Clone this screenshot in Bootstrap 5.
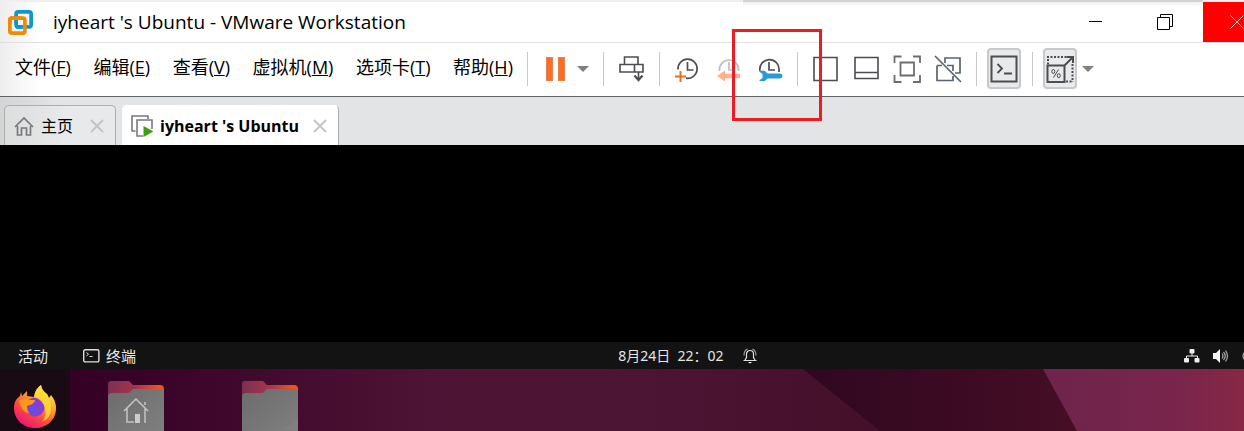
<!DOCTYPE html>
<html lang="zh-CN">
<head>
<meta charset="utf-8">
<meta name="viewport" content="width=device-width, initial-scale=1">
<title>iyheart 's Ubuntu - VMware Workstation</title>
<link href="https://cdn.jsdelivr.net/npm/bootstrap@5.3.0/dist/css/bootstrap.min.css" rel="stylesheet">
<style>
  body { font-family: "Open Sans", "Noto Sans CJK SC", sans-serif; background: #000; color: #000; overflow-x: hidden; }
  button { border: 0; background: none; padding: 0; color: inherit; }
  svg { display: block; flex: none; }

  .title-bar { height: 43px; padding-left: 8px; border-top: 2px solid #efefef; border-bottom: 1px solid #e0e0e0;
    background: linear-gradient(90deg, #ededed, #fff 40px); }
  .title-text { font-size: 19px; line-height: 24px; margin-left: 20px; font-weight: 400; }
  .top-shade { top: -2px; right: 41px; width: 37%; height: 7px; background: linear-gradient(#d2d2d2 2px, #f0f0f0 2px, #fff); }
  .caption-btns { padding-right: 3px; }
  .caption-btn { height: 40px; width: 70px; }
  .close-btn { height: 40px; background: #f00; width: 41px; padding-left: 27px; overflow: hidden; }

  .tool-bar { height: 54px; padding: 0 0 2px 15px; border-bottom: 1px solid #606366;
    background: linear-gradient(90deg, #ededed, #fff 40px); }
  .menu-list { width: 498px; font-size: 18px; line-height: 24px; padding-bottom: 4px; }
  .menu-list button { white-space: nowrap; }
  .tool-rule { width: 1px; height: 34px; margin: 0 13px 0 14px; background: #c8c8c8; flex: none; }
  .tool-group { gap: 13px; }
  .tool-toggle { width: 34px; height: 41px; margin: 0 -3px; border: 2px solid #c8c9ca; border-radius: 4px; background: #e9eaeb; }
  .caret-gap { margin-left: 8px; }

  .tab-strip { height: 48px; padding-left: 4px; gap: 6px;
    background: linear-gradient(90deg, #d3d4d5, #e3e4e6 60px); }
  .vm-tab { height: 40px; width: 112px; border: 1px solid #acadaf; border-bottom: 0; border-radius: 5px 5px 0 0;
    padding: 0 11px 0 9px; gap: 7px; font-size: 16px; background: linear-gradient(90deg, #dcdddd, #e8e9ea 60px); }
  .vm-tab.current { width: 217px; padding-left: 8px; background: #fff; border-left-color: #fff; border-top-color: #fff; font-weight: 700; }

  .vm-console { height: 197px; background: #000; }
  .guest-bar { height: 27px; background: #131313; color: #e6e6e6; font-size: 15px; line-height: 20px;
    font-family: "Noto Sans", "Noto Sans CJK SC", sans-serif; }
  .guest-left { flex: 0 0 49.7%; padding-left: 18px; gap: 35px; }
  .guest-app { gap: 6px; }
  .guest-clock { gap: 19px; white-space: pre; font-size: 14px; padding-top: 1px; }
  .guest-status { gap: 13px; overflow: hidden; }
  .guest-status .power { width: 2px; overflow: hidden; }
  .guest-desk { height: 62px; overflow: hidden; }
  .dock { width: 70px; height: 62px; background: #190b14; padding: 15px 0 0 14px; }
  .desk-icons { gap: 78px; padding: 11px 0 0 38px; }

  .callout-box { left: -23px; top: -26px; width: 90px; height: 92px; border: 3px solid #ed1c24; z-index: 5; pointer-events: none; }
</style>
</head>
<body>
<header class="title-bar d-flex align-items-center position-relative">
  <div class="top-shade position-absolute"></div>
  <svg width="25" height="25" viewBox="0 0 24 24" fill="none" stroke-width="3.6">
    <rect x="7.8" y="1.8" width="14.4" height="14.4" rx="2" stroke="#0f95d0"/>
    <rect x="1.8" y="7.8" width="14.4" height="14.4" rx="2" stroke="#f08a00"/>
    <path d="M7.8 13V7M7.8 16.2H13" stroke="#0f95d0"/>
    <path d="M6 7.8h7M1.8 14v-4q0-2.2 2.2-2.2h5" stroke="#f08a00"/>
  </svg>
  <h1 class="title-text mb-0">iyheart 's Ubuntu - VMware Workstation</h1>
  <div class="caption-btns d-flex ms-auto">
    <button class="caption-btn d-flex align-items-center justify-content-center" aria-label="最小化">
      <svg width="16" height="16"><path d="M2 7.5h13" stroke="#000"/></svg>
    </button>
    <button class="caption-btn d-flex align-items-center justify-content-center" aria-label="还原">
      <svg width="16" height="18" fill="none" stroke="#000"><path d="M.5 4.5h12v12h-12zM3.500 4.500v-3h12v12h-3"/></svg>
    </button>
  </div>
  <button class="close-btn d-flex align-items-center" aria-label="关闭">
    <svg width="14" height="14"><path d="M.5 .5l13 13M13.500 .5l-13 13" stroke="#fff" stroke-width=".8"/></svg>
  </button>
</header>

<nav class="tool-bar d-flex align-items-center">
  <div class="menu-list d-flex justify-content-between flex-shrink-0">
    <button>文件(<u>F</u>)</button>
    <button>编辑(<u>E</u>)</button>
    <button>查看(<u>V</u>)</button>
    <button>虚拟机(<u>M</u>)</button>
    <button>选项卡(<u>T</u>)</button>
    <button>帮助(<u>H</u>)</button>
  </div>
  <span class="tool-rule"></span>
  <button aria-label="挂起"><svg width="28" height="28"><path d="M5 2h7v24H5zM17 2h7v24h-7z" fill="#ff6d24"/><path d="M5.500 2.500h6v23h-6zM17.500 2.500h6v23h-6z" fill="none" stroke="#d98a5e" stroke-opacity=".7"/></svg></button>
  <button class="caret-gap" aria-label="电源选项"><svg width="12" height="28"><path d="M0 11h12l-6 6z" fill="#808080"/></svg></button>
  <span class="tool-rule"></span>
  <button aria-label="发送 Ctrl+Alt+Del"><svg width="28" height="28" fill="none" stroke="#4b4d50" stroke-width="1.600"><path d="M7.500 2h13.500v7.500H7.500zM3 9.500h23v7.500H3zM17.500 9.500V17M21.500 17v8"/><path d="M17.500 20.500l4 4.500 4-4.500" stroke-width="2.200"/></svg></button>
  <span class="tool-rule"></span>
  <div class="tool-group d-flex">
    <button aria-label="拍摄快照"><svg width="28" height="28" fill="none" stroke="#4b4d50" stroke-width="1.700"><path d="M5 14.500a9.600 9.600 0 1 1 8 8.700M14.500 7v8h6"/><path d="M7.500 16v11M2 21.500h11" stroke="#f76b1c" stroke-width="2"/></svg></button>
    <button aria-label="恢复快照"><svg width="28" height="28" fill="none" stroke="#bfc0c1" stroke-width="1.700"><path d="M5.500 16a9.600 9.600 0 1 1 19 0M15 7v8h5"/><path d="M3 21l8-5.500v3.200h15v4.600H11v3.200z" fill="#ffb18a" stroke="none"/></svg></button>
    <div class="position-relative">
      <button class="d-block" aria-label="管理快照"><svg width="28" height="28" fill="none" stroke="#4b4d50" stroke-width="1.700"><path d="M5 16a9.600 9.600 0 1 1 19-1v2M14 7v8h6"/><path d="M4 16.500q5.500-2.500 8.500 2h12.500a2.400 2.400 0 0 1 0 4.900H12.500q-3 4.500-8.500 2.100l3.500-2.500v-4z" fill="#2b9adb" stroke="none"/></svg></button>
      <div class="callout-box position-absolute"></div>
    </div>
  </div>
  <span class="tool-rule"></span>
  <div class="tool-group d-flex">
    <button aria-label="显示库"><svg width="28" height="28" fill="none" stroke="#4b4d50" stroke-width="1.600"><path d="M3 2.500h23v23H3zM9.500 2.500v23"/></svg></button>
    <button aria-label="缩略图栏"><svg width="28" height="28" fill="none" stroke="#4b4d50" stroke-width="1.600"><path d="M3 2.500h23v21H3zM3 17.500h23"/></svg></button>
    <button aria-label="全屏"><svg width="28" height="28" fill="none" stroke="#6b6d70" stroke-width="1.800"><path d="M1.500 8V1.500h7M20 1.500h7V8M27 20v7h-7M8.500 27h-7v-7M7.500 7.500h13.500v13H7.500z"/></svg></button>
    <button aria-label="Unity 模式"><svg width="28" height="28" fill="none" stroke="#5a6470" stroke-width="1.700"><path d="M11 8V3h15v15h-5M3 10.500v15h16V21M3 10.500h5M13 10.500h6V16M1 1l26 26"/></svg></button>
  </div>
  <span class="tool-rule"></span>
  <button class="tool-toggle d-flex align-items-center justify-content-center" aria-label="控制台视图"><svg width="28" height="28" fill="none" stroke="#4b4d50" stroke-width="2"><path d="M1.500 1.500h25v25h-25z"/><path d="M7.500 9l4.500 4.500L7.500 18M14 18.500h8" stroke-width="1.800"/></svg></button>
  <span class="tool-rule"></span>
  <button class="tool-toggle d-flex align-items-center justify-content-center" aria-label="自由拉伸"><svg width="28" height="28" fill="none" stroke="#4b4d50" stroke-width="2"><path d="M1.500 10.500h17v16.500h-17zM18.500 10.500l8-8M20.500 2H27v6"/><path d="M1 2h20M2 4v6M26.500 9v18M20 26.500h6" stroke-dasharray="2 1.500"/><path d="M12.500 14.500l-5 8" stroke-width="1"/><ellipse cx="7.300" cy="16.500" rx="1.500" ry="2" stroke-width="1"/><ellipse cx="12.800" cy="20.700" rx="1.500" ry="2" stroke-width="1"/></svg></button>
  <button class="caret-gap" aria-label="拉伸选项"><svg width="12" height="28"><path d="M0 11h12l-6 6z" fill="#808080"/></svg></button>
</nav>

<div class="tab-strip d-flex align-items-end">
  <div class="vm-tab d-flex align-items-center">
    <svg width="20" height="20" fill="none" stroke="#77797b" stroke-width="1.700"><path d="M1 11L10 2l9 9M3.500 10v9h4v-7h5v7h4v-9"/></svg>
    <span>主页</span>
    <button class="ms-auto" aria-label="关闭主页"><svg width="14" height="14"><path d="M1 1l12 12M13 1L1 13" stroke="#c3c4c5" stroke-width="1.800"/></svg></button>
  </div>
  <div class="vm-tab current d-flex align-items-center">
    <svg width="22" height="22" fill="none" stroke="#77797b" stroke-width="1.600"><path d="M4.500 16H1V1h16v3"/><path d="M12 21H6V5h15v9"/><path d="M12.500 11v11l10-5.500z" fill="#459b12" stroke="none"/></svg>
    <span class="text-nowrap">iyheart 's Ubuntu</span>
    <button class="ms-auto" aria-label="关闭 iyheart 's Ubuntu"><svg width="14" height="14"><path d="M1 1l12 12M13 1L1 13" stroke="#c3c4c5" stroke-width="1.800"/></svg></button>
  </div>
</div>

<main>
  <div class="vm-console"></div>
  <div class="guest-bar d-flex align-items-center">
    <div class="guest-left d-flex align-items-center">
      <span>活动</span>
      <span class="guest-app d-flex align-items-center">
        <svg width="17" height="14" fill="none" stroke="#dedede" stroke-width="1.400"><rect x=".7" y=".7" width="15.200" height="12.200" rx="1.500"/><path d="M3.500 3.500l2 1.700-2 1.700M6.500 7.500h3" stroke-width="1"/></svg>
        <span>终端</span>
      </span>
    </div>
    <div class="guest-clock d-flex align-items-center"><span>8月24日  22：02</span><svg width="14" height="16" fill="none" stroke="#dedede" stroke-width="1.200"><path d="M.5 12.500h13M2 12l1.500-2.500V6a3.500 3.500 0 0 1 7 0v3.500L12 12"/><path d="M1 7.500q0-5 3.500-6.500M13 7.500q0-5-3.500-6.500" stroke="#999"/><path d="M5 14h4l-2 1.600z" fill="#fff" stroke="none"/></svg></div>
    <div class="guest-status d-flex align-items-center ms-auto">
      <svg width="16" height="14" fill="#eee"><rect x="5.500" y="0" width="5" height="4.500" rx="1"/><rect x="0" y="9" width="5" height="4.500" rx="1"/><rect x="10.500" y="9" width="5" height="4.500" rx="1"/><path d="M8 4v3M2.500 9.500V7h11v2.500" fill="none" stroke="#eee"/></svg>
      <svg width="16" height="14" fill="none" stroke="#aaa" stroke-width="1.200"><path d="M0 4h3l4-4v14l-4-4H0z" fill="#f4f4f4" stroke="none"/><path d="M9 4.500q2 2.500 0 5M10.500 3q3.500 4 0 8M12.500 1.500q4 5.500 0 11"/></svg>
      <span class="power"><svg width="14" height="14" fill="none" stroke="#ccc"><circle cx="7" cy="7" r="6"/></svg></span>
    </div>
  </div>
  <div class="guest-desk position-relative">
    <svg class="position-absolute top-0 start-0 w-100 h-100" viewBox="0 0 1244 62" preserveAspectRatio="none">
      <defs>
        <linearGradient id="wallLeft"><stop offset="0" stop-color="#300022"/><stop offset=".15" stop-color="#380227"/><stop offset=".5" stop-color="#4e1435"/><stop offset=".75" stop-color="#4c1433"/><stop offset="1" stop-color="#441029"/></linearGradient>
        <linearGradient id="wallMid"><stop offset="0" stop-color="#300720"/><stop offset="1" stop-color="#450e25"/></linearGradient>
        <linearGradient id="wallRight"><stop offset="0" stop-color="#6e244c"/><stop offset=".7" stop-color="#7a254b"/><stop offset="1" stop-color="#872845"/></linearGradient>
      </defs>
      <path d="M0 0h804l77 62H0z" fill="url(#wallLeft)"/>
      <path d="M803 0h241l34 62H880z" fill="url(#wallMid)"/>
      <path d="M1043 0h201v62h-167z" fill="url(#wallRight)"/>
    </svg>
    <div class="d-flex position-relative">
      <div class="dock">
        <svg width="42" height="44" viewBox="0 0 42 44">
          <defs>
            <linearGradient id="foxFire" x1=".85" y1=".05" x2=".25" y2="1"><stop offset="0" stop-color="#fff44f"/><stop offset=".35" stop-color="#ffa42a"/><stop offset=".65" stop-color="#ff4a3d"/><stop offset="1" stop-color="#e8107c"/></linearGradient>
            <radialGradient id="foxGlobe" cx=".4" cy=".65" r=".65"><stop offset="0" stop-color="#6050e8"/><stop offset="1" stop-color="#9a35cb"/></radialGradient>
          </defs>
          <path d="M7 8l1 4 5-5v5l7 1q1-8 7-12 1 6 6 9l2 4 2-3q5 6 5 13c0 12-9 20-21 20S0 35 0 24c0-6 2-9 6-12z" fill="url(#foxFire)"/>
          <circle cx="21" cy="23" r="9.500" fill="url(#foxGlobe)"/>
          <path d="M5 17q5-4 10-1h6q0 3-5 5l-3 1q0 5 3 8-9-2-11-13z" fill="#ff971c"/>
          <path d="M20 13q1-8 7-12 1 6 6 9 4 7 4 14 0 10-9 14 5-6 3-14-2-8-11-11z" fill="#ffe03b" opacity=".8"/>
        </svg>
      </div>
      <div class="desk-icons d-flex">
        <svg width="56" height="56">
          <defs><linearGradient id="folderBack"><stop offset="0" stop-color="#7c2f52"/><stop offset=".5" stop-color="#a5364c"/><stop offset=".9" stop-color="#e95420"/></linearGradient>
          <linearGradient id="folderFront" x2="1" y2="1"><stop offset="0" stop-color="#6c6c6c"/><stop offset="1" stop-color="#808080"/></linearGradient></defs>
          <path d="M0 4q0-3 3-3h18l4 4h27q4 0 4 4v20H0z" fill="url(#folderBack)"/>
          <path d="M0 17q0-4 4-4h17l4-4h27q4 0 4 4v43H0z" fill="url(#folderFront)"/>
          <path d="M16 31l12-12 12 12M19 28v14h7M37 28v15M37 22v3" fill="none" stroke="#c4c4c4" stroke-width="1.500"/><path d="M27 43v-9h5v9z" fill="#ccc"/>
        </svg>
        <svg width="56" height="56">
          <path d="M0 4q0-3 3-3h18l4 4h27q4 0 4 4v20H0z" fill="url(#folderBack)"/>
          <path d="M0 17q0-4 4-4h17l4-4h27q4 0 4 4v43H0z" fill="url(#folderFront)"/>
          <path d="M56 38L42 50h14z" fill="#808080"/>
        </svg>
      </div>
    </div>
  </div>
</main>
<script src="https://cdn.jsdelivr.net/npm/bootstrap@5.3.0/dist/js/bootstrap.bundle.min.js"></script>
</body>
</html>
